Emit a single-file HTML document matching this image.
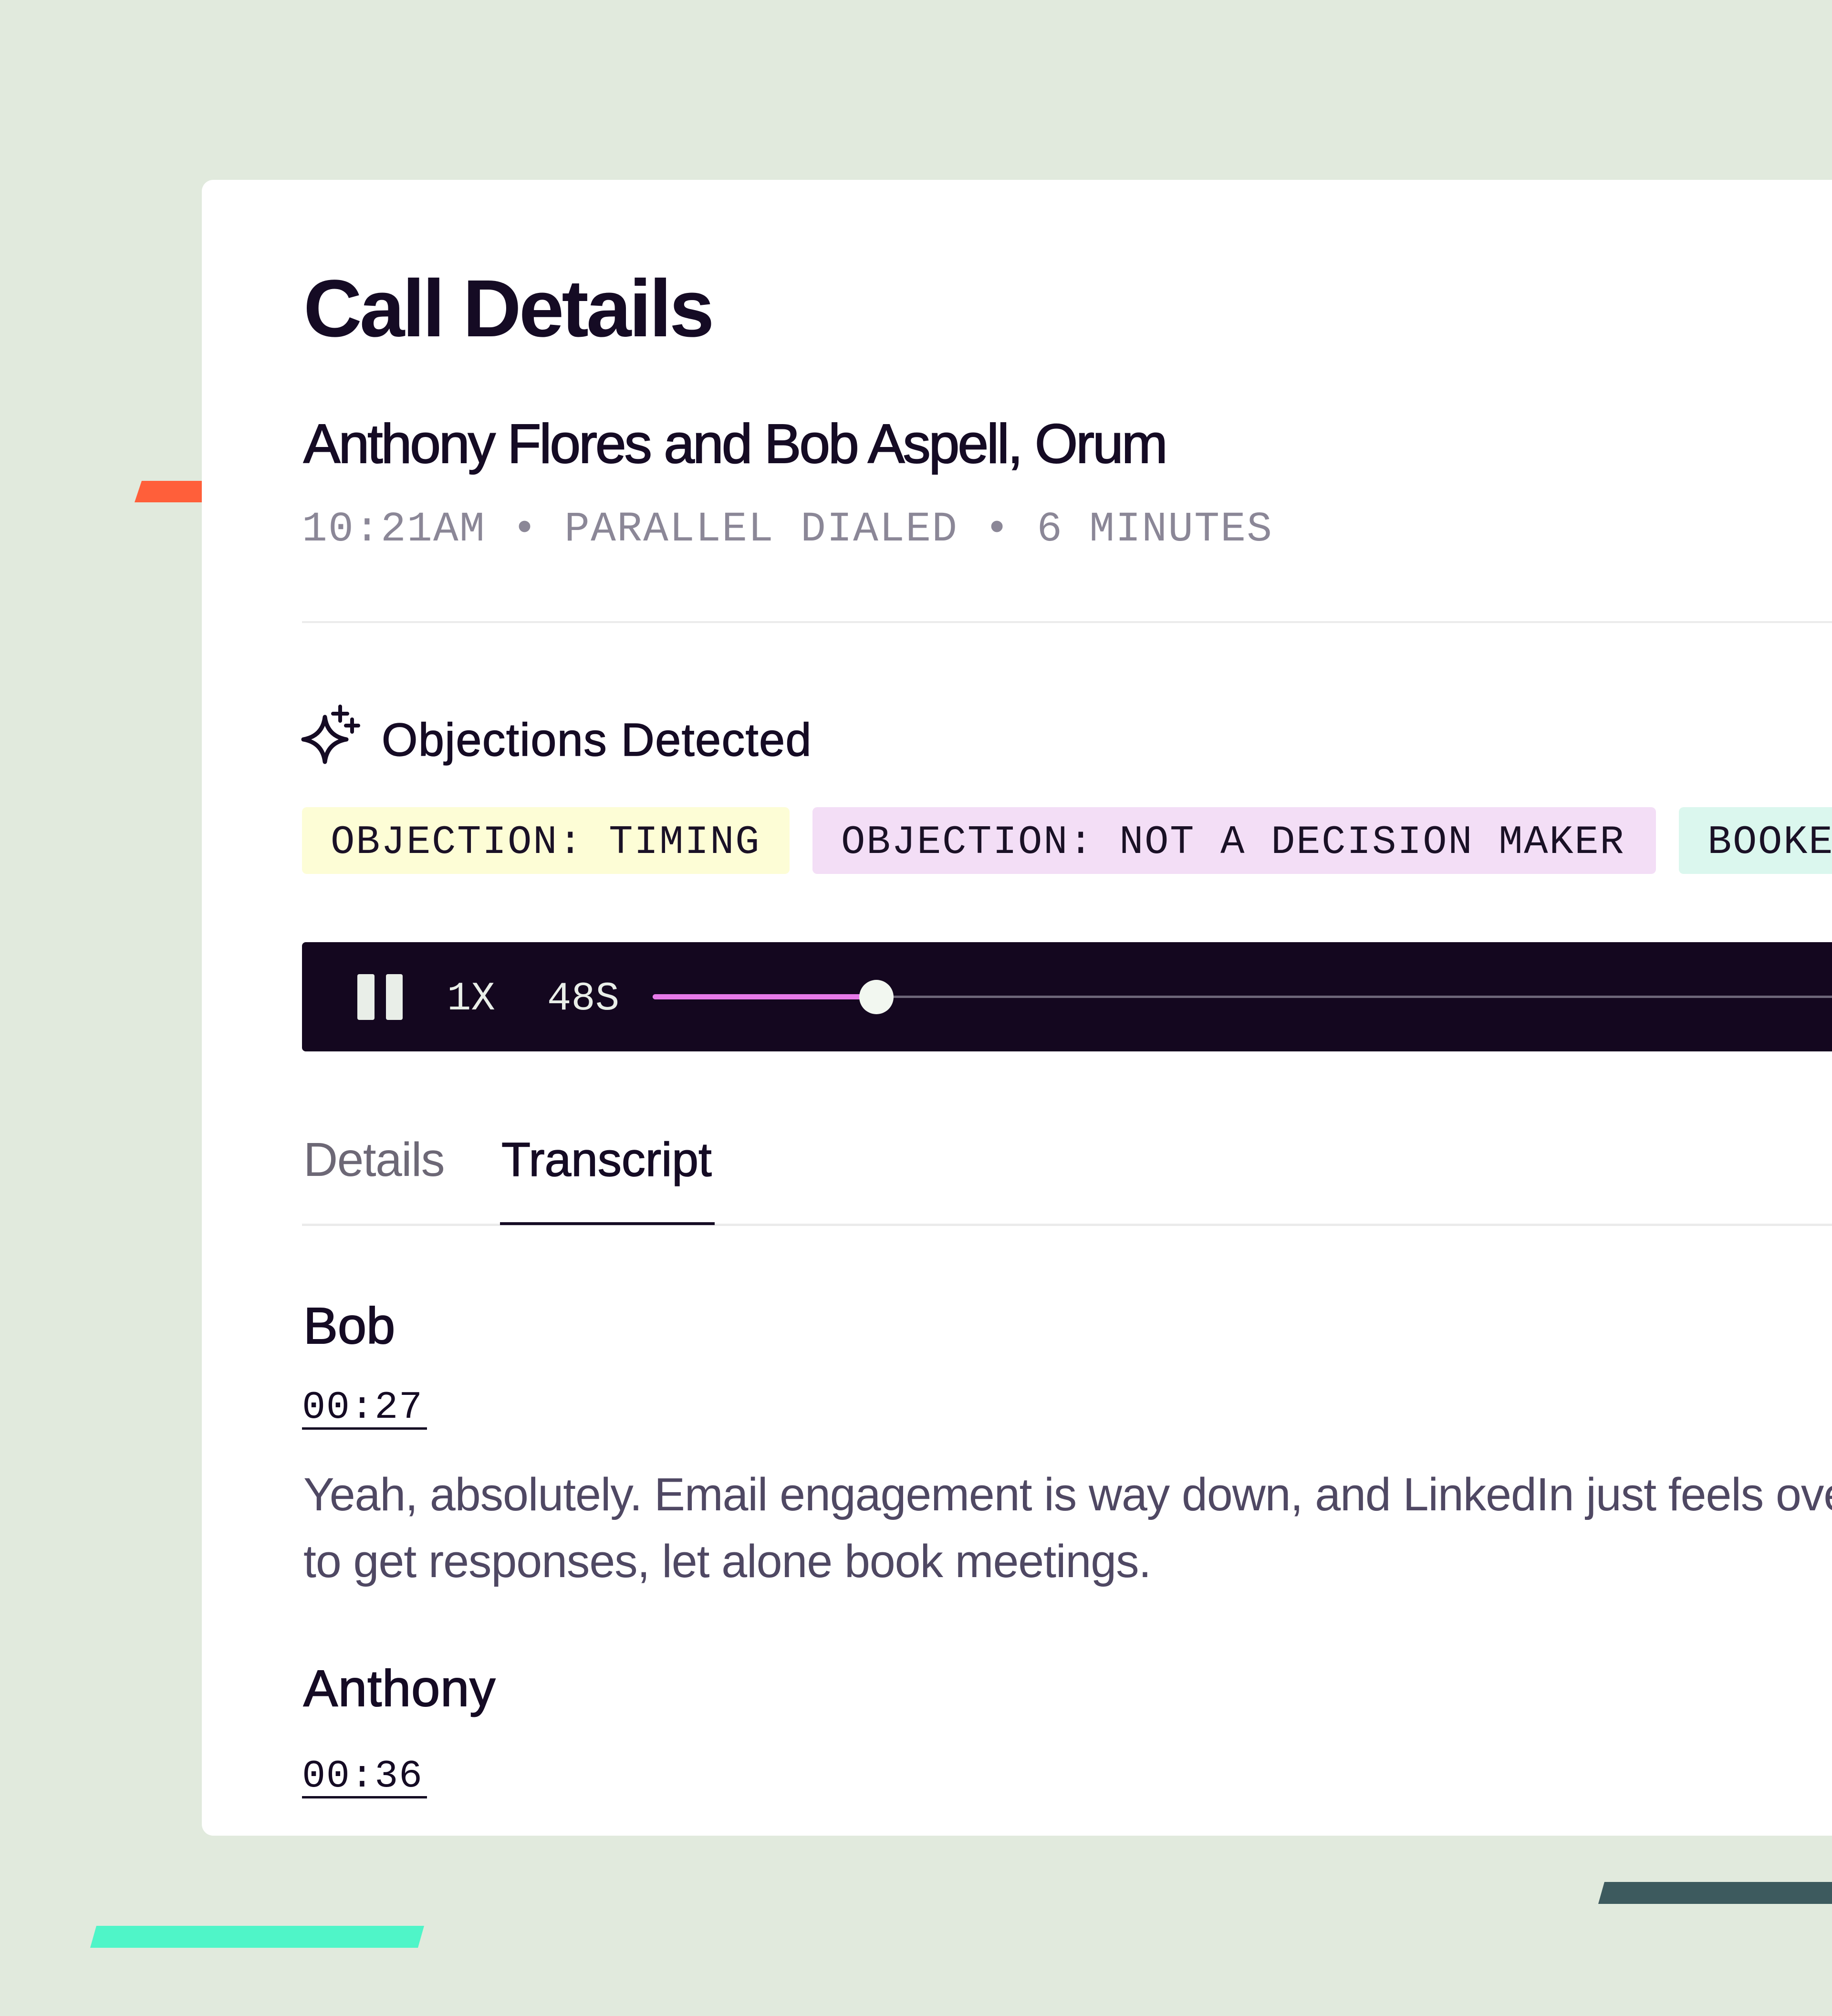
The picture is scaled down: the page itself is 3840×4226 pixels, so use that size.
<!DOCTYPE html>
<html><head><meta charset="utf-8">
<style>
html,body{margin:0;padding:0}
body{width:3840px;height:4226px;background:#e1eadd;position:relative;overflow:hidden;font-family:"Liberation Sans",sans-serif;color:#150b24}
.a{position:absolute;white-space:nowrap;line-height:1}
.card{position:absolute;left:423px;top:377px;width:3600px;height:3471px;background:#fff;border-radius:24px;overflow:hidden}
.mono{font-family:"Liberation Mono",monospace}
.tag{position:absolute;top:1692px;height:140px;border-radius:10px;display:flex;align-items:center;font-family:"Liberation Mono",monospace;font-size:84px;letter-spacing:2.6px;color:#1a1126;white-space:nowrap;box-sizing:border-box;padding-left:60px;padding-top:8px}
</style></head><body>
<svg width="3840" height="4226" style="position:absolute;left:0;top:0">
<polygon points="297,1008 440,1008 440,1053 282,1053" fill="#ff5f3a"/>
<polygon points="202,4037 889,4037 876,4083 189,4083" fill="#4ff5c8"/>
<polygon points="3363,3945 3840,3945 3840,3991 3350,3991" fill="#3d5a5e"/>
</svg>
<div class="card"></div>
<div style="position:absolute;left:0;top:0;width:3840px;height:3848px;overflow:hidden">
<div class="a" style="left:636px;top:562px;font-size:170px;font-weight:bold;letter-spacing:-5px">Call Details</div>
<div class="a" style="left:636px;top:872px;font-size:116px;-webkit-text-stroke:2px #150b24;letter-spacing:-3.8px">Anthony Flores and Bob Aspell, Orum</div>
<div class="a mono" style="left:633px;top:1067px;font-size:88px;letter-spacing:2.2px;color:#8b8797">10:21AM • PARALLEL DIALED • 6 MINUTES</div>
<div style="position:absolute;left:633px;top:1302px;width:3300px;height:4px;background:#ebebeb"></div>
<svg style="position:absolute;left:620px;top:1470px" width="140" height="140" viewBox="620 1470 140 140">
<path d="M681 1503 Q686 1543 726 1550 Q686 1557 681 1597 Q676 1557 636 1550 Q676 1543 681 1503 Z" fill="none" stroke="#150b24" stroke-width="9" stroke-linejoin="round"/>
<path d="M713 1481 V1511 M698 1496 H728 M738 1508 V1534 M725 1521 H751" stroke="#150b24" stroke-width="8" stroke-linecap="round"/>
</svg>
<div class="a" style="left:800px;top:1502px;font-size:97px;-webkit-text-stroke:1.5px #150b24;letter-spacing:1.5px">Objections Detected</div>
<div class="tag" style="left:633px;width:1022px;background:#fdfdd6">OBJECTION: TIMING</div>
<div class="tag" style="left:1703px;width:1768px;background:#f3def6">OBJECTION: NOT A DECISION MAKER</div>
<div class="tag" style="left:3519px;width:800px;background:#dbf7ee">BOOKED MEETING</div>
<div style="position:absolute;left:633px;top:1975px;width:3400px;height:229px;background:#14071f;border-radius:8px"></div>
<div style="position:absolute;left:749px;top:2042px;width:36px;height:96px;background:#e9eee8;border-radius:4px"></div>
<div style="position:absolute;left:809px;top:2042px;width:35px;height:96px;background:#e9eee8;border-radius:4px"></div>
<div class="a mono" style="left:937px;top:2053px;font-size:84px;color:#e9eee8">1X</div>
<div class="a mono" style="left:1147px;top:2053px;font-size:84px;color:#e9eee8">48S</div>
<div style="position:absolute;left:1368px;top:2087px;width:2500px;height:5px;background:#6d6578"></div>
<div style="position:absolute;left:1368px;top:2084px;width:470px;height:11px;background:#e77ae8;border-radius:6px"></div>
<div style="position:absolute;left:1801px;top:2054px;width:72px;height:72px;background:#f2f7f0;border-radius:50%"></div>
<div class="a" style="left:636px;top:2381px;font-size:100px;color:#6d6876;letter-spacing:-1.5px">Details</div>
<div class="a" style="left:1051px;top:2381px;font-size:100px;-webkit-text-stroke:1.5px #150b24">Transcript</div>
<div style="position:absolute;left:633px;top:2565px;width:3300px;height:5px;background:#ebebeb"></div>
<div style="position:absolute;left:1048px;top:2562px;width:450px;height:6px;background:#150b24"></div>
<div class="a" style="left:636px;top:2725px;font-size:108px;-webkit-text-stroke:2px #150b24">Bob</div>
<div class="a mono" style="left:633px;top:2910px;font-size:82px;letter-spacing:1.5px">00:27</div>
<div style="position:absolute;left:633px;top:2992px;width:262px;height:5px;background:#150b24"></div>
<div style="position:absolute;left:636px;top:3063px;font-size:97px;line-height:140px;color:#4f4863;white-space:nowrap;letter-spacing:-1.1px">Yeah, absolutely. Email engagement is way down, and LinkedIn just feels overwhelming. It's hard<br>to get responses, let alone book meetings.</div>
<div class="a" style="left:636px;top:3485px;font-size:108px;-webkit-text-stroke:2px #150b24;letter-spacing:1px">Anthony</div>
<div class="a mono" style="left:633px;top:3683px;font-size:82px;letter-spacing:1.5px">00:36</div>
<div style="position:absolute;left:633px;top:3765px;width:262px;height:5px;background:#150b24"></div>
</div>
</body></html>
